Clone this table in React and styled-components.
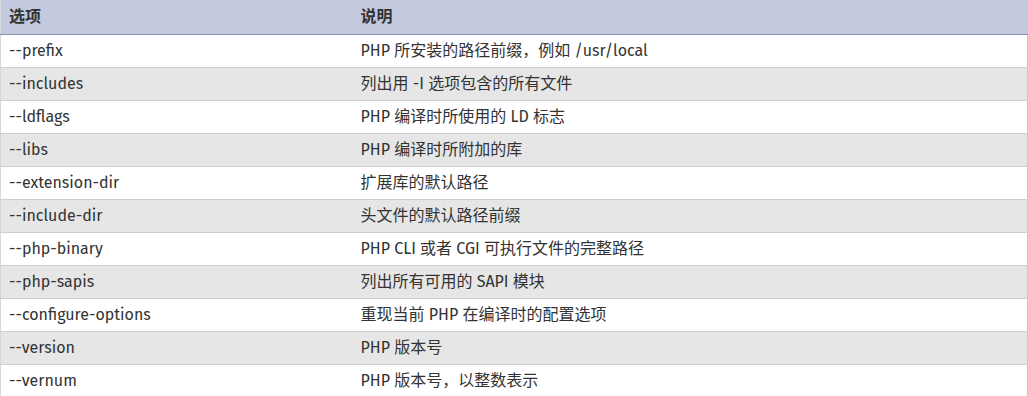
import React from "react";
import styled, { createGlobalStyle } from "styled-components";

const Global = createGlobalStyle`
  html, body { margin: 0; padding: 0; background: #fff; }
  body {
    font-family: "Fira Sans", "Open Sans", "Noto Sans CJK SC", sans-serif;
    color: #333;
  }
`;

const Table = styled.table`
  width: 1028px;
  border-collapse: collapse;
  border-left: 1px solid #d8d8d8;
  border-right: 1px solid #c8c8c8;
  font-size: 16px;
  line-height: 20px;
  table-layout: fixed;
`;

const HeadRow = styled.tr`
  background: #c4c9df;
  border-bottom: 1px solid #8890b8;
`;

const Th = styled.th`
  height: 34px;
  padding: 0 8px;
  box-sizing: border-box;
  text-align: left;
  font-weight: 700;
  color: #333;
  width: ${(p) => p.$w || "auto"};
`;

const Row = styled.tr`
  background: ${(p) => (p.$alt ? "#e6e6e6" : "#fff")};
  border-bottom: 1px solid #cfcfcf;
`;

const Td = styled.td`
  height: 33px;
  padding: 0 8px;
  box-sizing: border-box;
  color: #333;
  white-space: nowrap;
`;

const rows = [
  ["--prefix", "PHP 所安装的路径前缀，例如 /usr/local"],
  ["--includes", "列出用 -I 选项包含的所有文件"],
  ["--ldflags", "PHP 编译时所使用的 LD 标志"],
  ["--libs", "PHP 编译时所附加的库"],
  ["--extension-dir", "扩展库的默认路径"],
  ["--include-dir", "头文件的默认路径前缀"],
  ["--php-binary", "PHP CLI 或者 CGI 可执行文件的完整路径"],
  ["--php-sapis", "列出所有可用的 SAPI 模块"],
  ["--configure-options", "重现当前 PHP 在编译时的配置选项"],
  ["--version", "PHP 版本号"],
  ["--vernum", "PHP 版本号，以整数表示"],
];

export default function App() {
  return (
    <>
      <Global />
      <Table>
        <thead>
          <HeadRow>
            <Th $w="352px">选项</Th>
            <Th>说明</Th>
          </HeadRow>
        </thead>
        <tbody>
          {rows.map(([opt, desc], i) => (
            <Row key={opt} $alt={i % 2 === 1}>
              <Td>{opt}</Td>
              <Td>{desc}</Td>
            </Row>
          ))}
        </tbody>
      </Table>
    </>
  );
}
